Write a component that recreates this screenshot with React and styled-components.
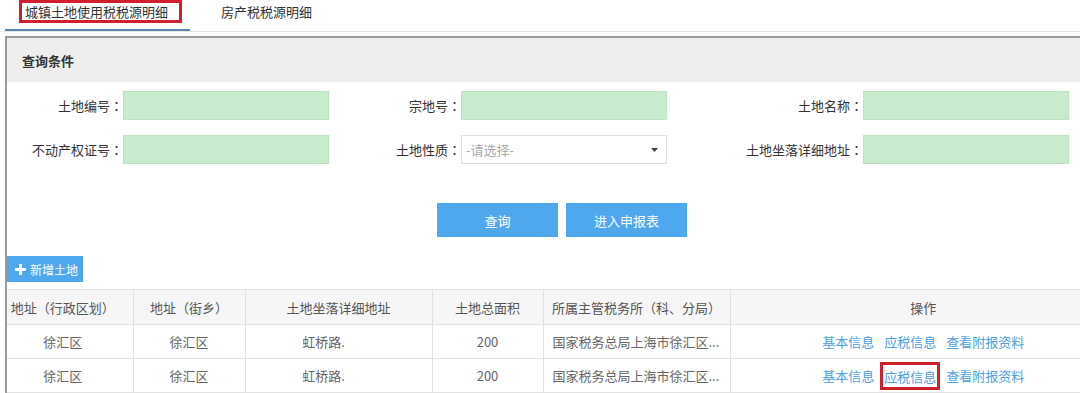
import React from "react";
import styled, { createGlobalStyle } from "styled-components";

const GlobalStyle = createGlobalStyle`
  html, body {
    margin: 0;
    padding: 0;
    background: #fff;
    overflow: hidden;
  }
  body {
    font-family: "Noto Sans CJK SC", "Noto Sans", sans-serif;
    font-size: 13px;
    color: #333;
  }
`;

const Page = styled.div`
  width: 1117px;
`;

const TabBar = styled.div`
  display: flex;
  align-items: flex-start;
  height: 31px;
  padding-left: 5px;
  border-bottom: 1px solid #e4e4e4;
`;

const Tab = styled.div`
  box-sizing: border-box;
  height: 31px;
  width: ${p => (p.$active ? "185px" : "auto")};
  padding-left: ${p => (p.$active ? "14px" : "31px")};
  padding-top: ${p => (p.$active ? "0" : "3px")};
  border-bottom: ${p => (p.$active ? "2px solid #5b86b4" : "none")};
  line-height: 17px;
  color: #333;
`;

const Mark = styled.span`
  display: inline-block;
  border: 3px solid #d1202d;
  padding: ${p => p.$pad || "0 3px"};
  line-height: ${p => p.$lh || "17px"};
`;

const Panel = styled.div`
  margin-top: 4px;
  margin-left: 5px;
  border-top: 2px solid #9a9a9a;
  border-left: 2px solid #9a9a9a;
  padding-bottom: 10px;
`;

const PanelHeader = styled.div`
  height: 44px;
  display: flex;
  align-items: center;
  padding-left: 15px;
  background: #eeeeee;
  font-weight: bold;
  color: #333;
`;

const FormGrid = styled.div`
  display: grid;
  grid-template-columns: 116px 206px 132px 206px 196px 206px;
  grid-auto-rows: 29px;
  row-gap: 15px;
  padding-top: 9px;
`;

const Label = styled.label`
  display: flex;
  align-items: center;
  justify-content: flex-end;
  padding-right: 0;
  color: #333;
  white-space: nowrap;
`;

const Colon = styled.span`
  font-family: "Noto Sans CJK TC", "Noto Sans CJK SC", sans-serif;
`;

const Field = styled.div`
  box-sizing: border-box;
  height: 29px;
  background: #c7ebcc;
  border: 1px solid #bfe2c3;
`;

const Select = styled.div`
  box-sizing: border-box;
  height: 29px;
  display: flex;
  align-items: center;
  justify-content: space-between;
  padding: 0 8px 0 4px;
  background: #fff;
  border: 1px solid #e0e0e0;
  color: #aaa;
`;

const ButtonRow = styled.div`
  display: flex;
  justify-content: center;
  gap: 8px;
  margin-top: 39px;
`;

const Button = styled.div`
  width: 121px;
  height: 34px;
  display: flex;
  align-items: center;
  justify-content: center;
  background: #4fa8ee;
  color: #fff;
`;

const AddButton = styled.div`
  width: 76px;
  height: 26px;
  margin-top: 19px;
  display: flex;
  align-items: center;
  gap: 4px;
  padding-left: 8px;
  box-sizing: border-box;
  background: #4fa8ee;
  color: #fff;
  font-size: 12px;
`;

const Table = styled.table`
  width: 100%;
  margin-top: 7px;
  border-collapse: collapse;
  table-layout: fixed;
`;

const Th = styled.th`
  height: 34px;
  padding: 0;
  padding-right: ${p => p.$pr || "0"};
  background: #f6f6f6;
  border: 1px solid #e2e2e2;
  border-left: none;
  font-weight: normal;
  color: #555;
  text-align: center;
  white-space: nowrap;
`;

const Td = styled.td`
  height: 33px;
  padding: 0;
  padding-left: ${p => p.$pl || "0"};
  padding-right: ${p => p.$pr || "0"};
  border: 1px solid #e2e2e2;
  border-left: none;
  color: #666;
  text-align: ${p => p.$align || "center"};
  white-space: nowrap;
`;

const Links = styled.div`
  display: flex;
  justify-content: center;
  align-items: center;
  gap: 10px;
`;

const Link = styled.a`
  color: #4c9fe0;
  text-decoration: none;
`;

const Caret = () => (
  <svg width="7" height="4" viewBox="0 0 7 4">
    <path d="M0 0h7L3.5 4z" fill="#444" />
  </svg>
);

const PlusIcon = () => (
  <svg width="11" height="11" viewBox="0 0 11 11">
    <rect x="4" y="0" width="3" height="11" fill="#fff" />
    <rect x="0" y="4" width="11" height="3" fill="#fff" />
  </svg>
);

const rows = [{ marked: false }, { marked: true }];

const FieldLabel = ({ children }) => (
  <Label>
    {children}
    <Colon>：</Colon>
  </Label>
);

export default function App() {
  return (
    <Page>
      <GlobalStyle />
      <TabBar>
        <Tab $active>
          <Mark $pad="0 11px 0 3px">城镇土地使用税税源明细</Mark>
        </Tab>
        <Tab>房产税税源明细</Tab>
      </TabBar>
      <Panel>
        <PanelHeader>查询条件</PanelHeader>
        <FormGrid>
          <FieldLabel>土地编号</FieldLabel>
          <Field />
          <FieldLabel>宗地号</FieldLabel>
          <Field />
          <FieldLabel>土地名称</FieldLabel>
          <Field />
          <FieldLabel>不动产权证号</FieldLabel>
          <Field />
          <FieldLabel>土地性质</FieldLabel>
          <Select>
            -请选择-
            <Caret />
          </Select>
          <FieldLabel>土地坐落详细地址</FieldLabel>
          <Field />
        </FormGrid>
        <ButtonRow>
          <Button>查询</Button>
          <Button>进入申报表</Button>
        </ButtonRow>
        <AddButton>
          <PlusIcon />
          新增土地
        </AddButton>
        <Table>
          <colgroup>
            <col style={{ width: 126 }} />
            <col style={{ width: 112 }} />
            <col style={{ width: 187 }} />
            <col style={{ width: 111 }} />
            <col style={{ width: 187 }} />
            <col />
          </colgroup>
          <thead>
            <tr>
              <Th $pr="14px">地址（行政区划）</Th>
              <Th>地址（街乡）</Th>
              <Th>土地坐落详细地址</Th>
              <Th>土地总面积</Th>
              <Th>所属主管税务所（科、分局）</Th>
              <Th>操作</Th>
            </tr>
          </thead>
          <tbody>
            {rows.map((r, i) => (
              <tr key={i}>
                <Td $pr="14px">徐汇区</Td>
                <Td>徐汇区</Td>
                <Td $pr="30px">虹桥路.</Td>
                <Td>200</Td>
                <Td $align="left" $pl="9px">国家税务总局上海市徐汇区...</Td>
                <Td>
                  <Links>
                    <Link>基本信息</Link>
                    {r.marked ? (
                      <Mark $pad="3px 1px 2px" $lh="17px" style={{ margin: "0 -4px" }}>
                        <Link>应税信息</Link>
                      </Mark>
                    ) : (
                      <Link>应税信息</Link>
                    )}
                    <Link>查看附报资料</Link>
                  </Links>
                </Td>
              </tr>
            ))}
          </tbody>
        </Table>
      </Panel>
    </Page>
  );
}
